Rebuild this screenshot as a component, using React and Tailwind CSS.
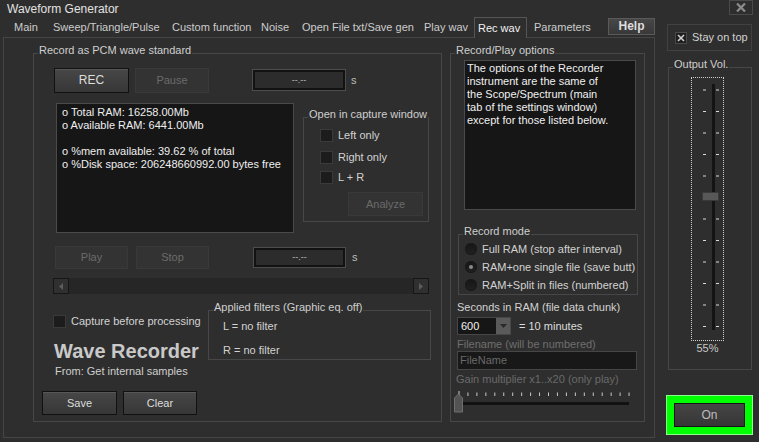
import React from 'react'

const BG = 'bg-[#2e2e2e]'

function Group({ label, className = '', children }) {
  return (
    <div className={`relative border border-[#474747] ${className}`}>
      <span className={`absolute left-[4px] top-[-10px] ${BG} px-[1px] leading-[13px] text-[#cfcfcf] whitespace-nowrap`}>
        {label}
      </span>
      {children}
    </div>
  )
}

function Btn({ children, disabled, className = '' }) {
  return (
    <button
      type="button"
      className={`flex items-center justify-center border leading-[13px] ${
        disabled
          ? 'border-[#393939] bg-[#333333] text-[#6b6b6b]'
          : 'border-[#111111] bg-gradient-to-b from-[#474747] to-[#373737] text-[#dddddd] shadow-[inset_0_1px_0_#575757]'
      } ${className}`}
    >
      {children}
    </button>
  )
}

function TimeField({ className = '' }) {
  return (
    <div className={`border border-[#4d4d4d] ${className}`}>
      <div className="flex h-full items-center justify-center border-2 border-[#121212] bg-[#2c2c2c] text-[9px] text-[#bbbbbb]">
        --.--
      </div>
    </div>
  )
}

function Check({ children, className = '' }) {
  return (
    <div className={`flex h-[13px] items-center ${className}`}>
      <span className="h-[13px] w-[13px] border border-[#3a3a3a] bg-[#1c1c1c]" />
      <span className="ml-[5px] whitespace-nowrap">{children}</span>
    </div>
  )
}

function Radio({ checked, children }) {
  return (
    <div className="flex h-[18px] items-center">
      <span className="flex h-[12px] w-[12px] items-center justify-center rounded-full bg-gradient-to-b from-[#151515] to-[#222222] shadow-[inset_0_0_0_1px_#1a1a1a]">
        {checked && <span className="h-[4px] w-[4px] rounded-full bg-[#8a8a8a]" />}
      </span>
      <span className="ml-[5px] whitespace-nowrap">{children}</span>
    </div>
  )
}

const tabs = [
  { label: 'Main', w: 'w-[39px]', pl: 'pl-[4px]' },
  { label: 'Sweep/Triangle/Pulse', w: 'w-[119px]', pl: 'pl-[4px]' },
  { label: 'Custom function', w: 'w-[89px]', pl: 'pl-[4px]' },
  { label: 'Noise', w: 'w-[41px]', pl: 'pl-[4px]' },
  { label: 'Open File txt/Save gen', w: 'w-[122px]', pl: 'pl-[4px]' },
  { label: 'Play wav', w: 'w-[54px]', pl: 'pl-[4px]' },
  { label: 'Rec wav', w: 'w-[53px]', pl: 'pl-[3px]', active: true },
  { label: 'Parameters', w: 'w-[64px]', pl: 'pl-[7px]' },
]

function GainSlider() {
  const ticks = Array.from({ length: 20 }, (_, i) => 5 + i * 8.95)
  return (
    <svg width="178" height="22" className="block">
      {ticks.map((x, i) => (
        <line key={i} x1={x} x2={x} y1={i === 0 ? 0 : 1.5} y2="5" stroke="#c8c8c8" strokeWidth="1" />
      ))}
      <rect x="5" y="11" width="170" height="3" fill="#121212" />
      <polygon points="0.5,21 8.5,21 8.5,7 4.5,3 0.5,7" fill="#535353" stroke="#6e6e6e" />
    </svg>
  )
}

function VolSlider() {
  const ticks = Array.from({ length: 12 }, (_, i) => 12 + i * 21.5)
  return (
    <svg width="31" height="262" className="block">
      <rect x="20" y="6" width="3" height="246" fill="#141414" />
      {ticks.map((y, i) =>
        i === 5 ? null : (
          <g key={i}>
            <line x1="11" x2="14" y1={y} y2={y} stroke="#d8d8d8" />
            <line x1="24" x2="27" y1={y} y2={y} stroke="#d8d8d8" />
          </g>
        )
      )}
      <rect x="10.5" y="114.5" width="16" height="8" fill="#585858" stroke="#3a3a3a" />
    </svg>
  )
}

export default function App() {
  return (
    <div className={`h-[442px] w-[759px] overflow-hidden ${BG} font-['Liberation_Sans',Arial,sans-serif] text-[11px] leading-[13px] text-[#d2d2d2]`}>
      {/* title bar */}
      <div className="flex h-[18px]">
        <div className="pl-[7px] pt-[2px] text-[12px] leading-[14px] text-[#e2e2e2]">Waveform Generator</div>
        <button type="button" className="ml-auto mr-[6px] flex h-[15px] w-[24px] items-center justify-center border border-[#4a4a4a] bg-[#2e2e2e]">
          <svg width="10" height="9" viewBox="0 0 10 9">
            <path d="M1 0.5 L9 8.5 M9 0.5 L1 8.5" stroke="#8c8c8c" strokeWidth="2.2" />
          </svg>
        </button>
      </div>

      <div className="flex">
        {/* tab control */}
        <div className="ml-[3px] w-[652px]">
          <div className="flex h-[19px] items-end pl-[7px]">
            {tabs.map((t) =>
              t.active ? (
                <div key={t.label} className={`relative z-10 mb-[-1px] flex h-[21px] items-center border border-b-0 border-[#555555] ${BG} ${t.w} ${t.pl} text-[#f2f2f2]`}>
                  {t.label}
                </div>
              ) : (
                <div key={t.label} className={`flex h-full items-center whitespace-nowrap ${t.w} ${t.pl} text-[#cccccc]`}>
                  {t.label}
                </div>
              )
            )}
            <button type="button" className="mb-[2px] ml-auto flex h-[17px] w-[47px] items-center justify-center self-start border border-[#5a5a5a] bg-gradient-to-b from-[#474747] to-[#383838] text-[12px] font-bold text-[#dddddd]">
              Help
            </button>
          </div>

          <div className="flex h-[401px] items-start border border-[#454545]">
            {/* left group */}
            <Group label="Record as PCM wave standard" className="ml-[29px] mt-[15px] h-[369px] w-[409px] shrink-0">
              <div className="ml-[20px] mt-[14px] flex items-start">
                <Btn className="h-[25px] w-[75px] text-[12px]">REC</Btn>
                <Btn disabled className="ml-[6px] h-[25px] w-[74px]">Pause</Btn>
                <TimeField className="ml-[43px] mt-[1px] h-[22px] w-[94px]" />
                <span className="ml-[5px] mt-[6px] text-[#bdbdbd]">s</span>
              </div>

              <div className="mt-[10px] flex items-start">
                <div className="ml-[22px] h-[130px] w-[238px] border border-[#4a4a4a] bg-[#161616] pl-[5px] pt-[2px] text-[#efefef]">
                  <div>o Total RAM: 16258.00Mb</div>
                  <div>o Available RAM: 6441.00Mb</div>
                  <div className="h-[13px]" />
                  <div>o %mem available: 39.62 % of total</div>
                  <div>o %Disk space: 206248660992.00 bytes free</div>
                </div>
                <Group label="Open in capture window" className="ml-[9px] mt-[14px] h-[105px] w-[126px]">
                  <div className="ml-[16px] mt-[11px]">
                    <Check>Left only</Check>
                    <Check className="mt-[9px]">Right only</Check>
                    <Check className="mt-[7px]">L + R</Check>
                  </div>
                  <Btn disabled className="ml-[44px] mt-[8px] h-[24px] w-[75px]">Analyze</Btn>
                </Group>
              </div>

              <div className="mt-[13px] flex items-start">
                <Btn disabled className="ml-[21px] h-[23px] w-[73px]">Play</Btn>
                <Btn disabled className="ml-[8px] h-[23px] w-[73px]">Stop</Btn>
                <TimeField className="ml-[44px] mt-[1px] h-[21px] w-[93px]" />
                <span className="ml-[6px] mt-[5px] text-[#bdbdbd]">s</span>
              </div>

              {/* scrollbar */}
              <div className="ml-[19px] mt-[9px] flex h-[16px] w-[376px] bg-[#262626]">
                <div className="flex h-[16px] w-[16px] items-center justify-center border border-[#161616] bg-[#303030]">
                  <svg width="4" height="7"><polygon points="4,0 4,7 0,3.5" fill="#5c5c5c" /></svg>
                </div>
                <div className="flex-1" />
                <div className="flex h-[16px] w-[16px] items-center justify-center border border-[#161616] bg-[#303030]">
                  <svg width="4" height="7"><polygon points="0,0 0,7 4,3.5" fill="#5c5c5c" /></svg>
                </div>
              </div>

              <div className="flex items-start">
                <div className="w-[174px] shrink-0">
                  <Check className="ml-[19px] mt-[21px]">Capture before processing</Check>
                  <div className="ml-[20px] mt-[11px] whitespace-nowrap text-[20px] font-bold leading-[24px] text-[#c9c9c9]">
                    Wave Recorder
                  </div>
                  <div className="ml-[21px] mt-[2px] text-[#cfcfcf]">From: Get internal samples</div>
                  <div className="ml-[8px] mt-[13px] flex">
                    <Btn className="h-[24px] w-[75px]">Save</Btn>
                    <Btn className="ml-[6px] h-[24px] w-[74px]">Clear</Btn>
                  </div>
                </div>
                <Group label="Applied filters (Graphic eq. off)" className="mt-[16px] h-[50px] w-[223px]">
                  <div className="pl-[14px] pt-[9px]">L = no filter</div>
                  <div className="mt-[11px] pl-[14px]">R = no filter</div>
                </Group>
              </div>
            </Group>

            {/* right group */}
            <Group label="Record/Play options" className="ml-[8px] mt-[15px] h-[369px] w-[195px] shrink-0">
              <div className="ml-[13px] mt-[6px] h-[150px] w-[172px] border border-[#4a4a4a] bg-[#161616] pl-[2px] pt-[1px] text-[#f0f0f0]">
                <div>The options of the Recorder</div>
                <div>instrument are the same of</div>
                <div>the Scope/Spectrum (main</div>
                <div>tab of the settings window)</div>
                <div>except for those listed below.</div>
              </div>
              <Group label="Record mode" className="ml-[7px] mt-[24px] h-[61px] w-[180px]">
                <div className="ml-[6px] mt-[5px]">
                  <Radio>Full RAM (stop after interval)</Radio>
                  <Radio checked>RAM+one single file (save butt)</Radio>
                  <Radio>RAM+Split in files (numbered)</Radio>
                </div>
              </Group>
              <div className="ml-[6px] mt-[6px]">Seconds in RAM (file data chunk)</div>
              <div className="ml-[6px] mt-[3px] flex items-center">
                <div className="flex h-[18px] w-[54px] border border-[#474747] bg-[#161616]">
                  <span className="flex-1 pl-[3px] leading-[16px] text-[#f0f0f0]">600</span>
                  <span className="flex w-[14px] items-center justify-center bg-[#5a5a5a]">
                    <svg width="7" height="4"><polygon points="0,0 7,0 3.5,4" fill="#2a2a2a" /></svg>
                  </span>
                </div>
                <span className="ml-[8px] text-[#dcdcdc]">= 10 minutes</span>
              </div>
              <div className="ml-[6px] mt-[3px] text-[#6f6f6f]">Filename (will be numbered)</div>
              <div className="ml-[6px] h-[19px] w-[180px] border border-[#464646] bg-[#181818] pl-[2px] leading-[17px] text-[#6a6a6a]">
                FileName
              </div>
              <div className="ml-[5px] mt-[3px] text-[#6a6a6a]">Gain multiplier x1..x20 (only play)</div>
              <div className="ml-[3px] mt-[5px]">
                <GainSlider />
              </div>
            </Group>
          </div>
        </div>

        {/* right column */}
        <div className="ml-[12px] w-[86px]">
          <div className="mt-[6px] flex h-[27px] w-[85px] items-center border border-[#414141]">
            <span className="ml-[7px] flex h-[12px] w-[12px] items-center justify-center border border-[#4a4a4a] bg-[#1e1e1e]">
              <svg width="8" height="8" viewBox="0 0 8 8">
                <path d="M1 1 L7 7 M7 1 L1 7" stroke="#cfcfcf" strokeWidth="1.6" />
              </svg>
            </span>
            <span className="ml-[5px] whitespace-nowrap">Stay on top</span>
          </div>

          <Group label="Output Vol." className="ml-[1px] mt-[16px] h-[303px] w-[84px]">
            <div className="ml-[22px] mt-[9px] h-[264px] w-[33px] border border-dotted border-[#cfcfcf]">
              <VolSlider />
            </div>
            <div className="ml-[22px] mt-[1px] w-[33px] text-center text-[#c8c8c8]">55%</div>
          </Group>

          <div className="ml-[-1px] mt-[25px] h-[40px] w-[87px] border border-[#8cff8c] bg-[#00ff00] p-[7px]">
            <button type="button" className="flex h-full w-full items-center justify-center border border-[#141414] bg-gradient-to-b from-[#454545] to-[#363636] text-[12px] text-[#bdbdbd]">
              On
            </button>
          </div>
        </div>
      </div>
    </div>
  )
}
